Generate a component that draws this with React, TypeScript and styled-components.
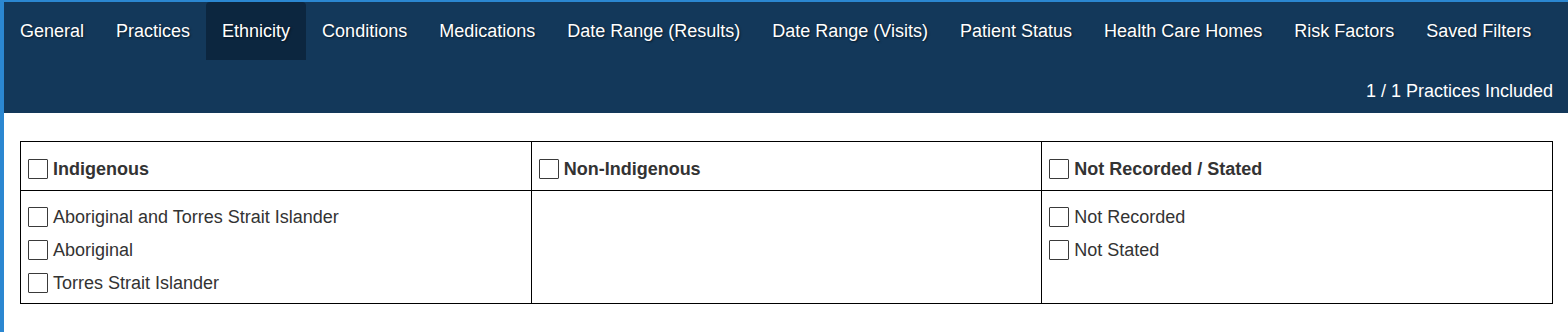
import React from 'react';
import styled, { createGlobalStyle } from 'styled-components';

const GlobalStyle = createGlobalStyle`
  html, body {
    margin: 0;
    padding: 0;
    background: #ffffff;
    font-family: "Liberation Sans", Arial, sans-serif;
  }
`;

// Outer frame with the blue accent edges
const Frame = styled.div`
  box-sizing: border-box;
  height: 332px;
  border-left: 4px solid #2b87d1;
  border-top: 2px solid #2b87d1;
  background: #ffffff;
`;

const NavBar = styled.div`
  background-color: #13385a;
  height: 111px;
  display: flex;
  flex-direction: column;
`;

const TabList = styled.nav`
  display: flex;
`;

const Tab = styled.a<{ $active?: boolean }>`
  display: block;
  padding: 16px 16px;
  font-size: 18px;
  line-height: 26px;
  color: #ffffff;
  text-decoration: none;
  text-shadow: 1px 1px 2px rgba(0, 0, 0, 0.55);
  border-radius: 4px 4px 0 0;
  background-color: ${(p) => (p.$active ? '#0c263f' : 'transparent')};
  cursor: pointer;
`;

const NavInfo = styled.div`
  margin-top: auto;
  padding: 0 15px 9px 0;
  text-align: right;
  font-size: 18px;
  line-height: 26px;
  color: #ffffff;
`;

const Content = styled.div`
  padding: 28px 15px 0 16px;
`;

const FilterTable = styled.table`
  width: 100%;
  border-collapse: collapse;
  table-layout: fixed;
  border: 1px solid #000;
`;

const HeadCell = styled.th`
  border: 1px solid #000;
  padding: 17px 7px 11px;
  text-align: left;
  vertical-align: middle;
`;

const BodyCell = styled.td`
  border: 1px solid #000;
  padding: 16px 7px 10px;
  vertical-align: top;
`;

const OptionRow = styled.label<{ $bold?: boolean }>`
  display: flex;
  align-items: center;
  gap: 5px;
  height: 20px;
  font-size: 18px;
  font-weight: ${(p) => (p.$bold ? 700 : 400)};
  color: #333333;
  cursor: pointer;

  & + & {
    margin-top: 13px;
  }
`;

const Box = styled.input.attrs({ type: 'checkbox' })`
  appearance: none;
  margin: 0;
  width: 20px;
  height: 20px;
  box-sizing: border-box;
  border: 1px solid #3a3a3a;
  border-radius: 1px;
  background: #ffffff;
  flex-shrink: 0;
`;

const tabs = [
  'General',
  'Practices',
  'Ethnicity',
  'Conditions',
  'Medications',
  'Date Range (Results)',
  'Date Range (Visits)',
  'Patient Status',
  'Health Care Homes',
  'Risk Factors',
  'Saved Filters',
];

const groups = [
  {
    title: 'Indigenous',
    options: ['Aboriginal and Torres Strait Islander', 'Aboriginal', 'Torres Strait Islander'],
  },
  { title: 'Non-Indigenous', options: [] as string[] },
  { title: 'Not Recorded / Stated', options: ['Not Recorded', 'Not Stated'] },
];

export default function App() {
  return (
    <>
      <GlobalStyle />
      <Frame>
        <NavBar>
          <TabList>
            {tabs.map((t) => (
              <Tab key={t} $active={t === 'Ethnicity'}>
                {t}
              </Tab>
            ))}
          </TabList>
          <NavInfo>1 / 1 Practices Included</NavInfo>
        </NavBar>
        <Content>
          <FilterTable>
            <thead>
              <tr>
                {groups.map((g) => (
                  <HeadCell key={g.title}>
                    <OptionRow $bold>
                      <Box />
                      {g.title}
                    </OptionRow>
                  </HeadCell>
                ))}
              </tr>
            </thead>
            <tbody>
              <tr>
                {groups.map((g) => (
                  <BodyCell key={g.title}>
                    {g.options.map((o) => (
                      <OptionRow key={o}>
                        <Box />
                        {o}
                      </OptionRow>
                    ))}
                  </BodyCell>
                ))}
              </tr>
            </tbody>
          </FilterTable>
        </Content>
      </Frame>
    </>
  );
}
